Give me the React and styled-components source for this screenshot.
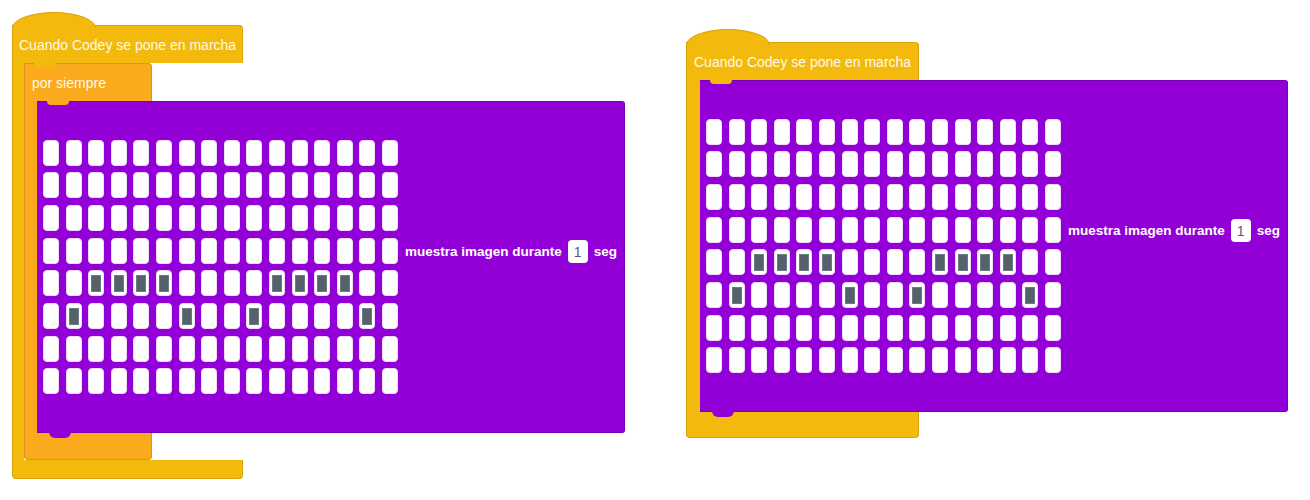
import React from "react";
import styled, { createGlobalStyle } from "styled-components";

const GlobalStyle = createGlobalStyle`
  body {
    margin: 0;
    background: #ffffff;
    font-family: "Liberation Sans", Arial, sans-serif;
  }
`;

const HAT = "#f4b90d";
const HAT_EDGE = "#d9a30b";
const LOOP = "#fcaa1d";
const LOOP_EDGE = "#e0921a";
const PURPLE = "#9300d7";
const PURPLE_EDGE = "#7a00b4";

const Page = styled.div`
  display: flex;
  align-items: flex-start;
  gap: 61px;
  padding: 25px 0 0 12px;
`;

const Script = styled.div`
  display: flex;
  flex-direction: column;
  align-items: flex-start;
  margin-top: ${props => props.$offset || 0}px;
`;

const Cap = styled.div`
  position: relative;
  box-sizing: border-box;
  width: ${props => props.$width}px;
  height: ${props => props.$height}px;
  background: ${props => props.$color};
  border: 1px solid ${props => props.$edge};
  border-bottom: none;
  border-radius: 0 4px 0 0;
  display: flex;
  align-items: center;
  padding-left: ${props => props.$pad}px;
  color: #fff9e6;
  font-size: 14px;

  ${props =>
    props.$hat &&
    `
    &::before {
      content: "";
      position: absolute;
      left: -1px;
      top: -14px;
      width: 82px;
      height: 15px;
      background: ${props.$color};
      border: 1px solid ${props.$edge};
      border-bottom: none;
      border-radius: 50% 50% 0 0 / 100% 100% 0 0;
    }
  `}

  ${props =>
    props.$notch &&
    `
    &::after {
      content: "";
      position: absolute;
      left: 9px;
      top: -1px;
      width: 22px;
      height: 4px;
      background: ${props.$notch};
      border-radius: 0 0 8px 8px;
    }
  `}
`;

const Body = styled.div`
  display: flex;
  align-items: stretch;
`;

const Arm = styled.div`
  width: ${props => props.$width}px;
  background: ${props => props.$color};
  border-left: 1px solid ${props => props.$edge};
  box-sizing: border-box;
`;

const Foot = styled.div`
  box-sizing: border-box;
  width: ${props => props.$width}px;
  height: ${props => props.$height}px;
  background: ${props => props.$color};
  border: 1px solid ${props => props.$edge};
  border-top: none;
  border-radius: 0 0 4px 4px;
`;

const DisplayBlock = styled.div`
  position: relative;
  box-sizing: border-box;
  width: 588px;
  height: 332px;
  background: ${PURPLE};
  border: 1px solid ${PURPLE_EDGE};
  border-left: none;
  border-radius: 0 3px 3px 0;
  display: flex;
  align-items: center;
  padding: 0 0 0 6px;

  &::before {
    content: "";
    position: absolute;
    left: 10px;
    top: -1px;
    width: 22px;
    height: 4px;
    background: ${props => props.$parent};
    border-radius: 0 0 8px 8px;
  }

  &::after {
    content: "";
    position: absolute;
    left: 12px;
    bottom: -6px;
    width: 22px;
    height: 6px;
    background: ${PURPLE};
    border-radius: 0 0 9px 9px;
  }
`;

const Matrix = styled.div`
  display: grid;
  grid-template-columns: repeat(16, 16px);
  grid-auto-rows: 26px;
  column-gap: 6.6px;
  row-gap: 6.7px;
`;

const Led = styled.div`
  box-sizing: border-box;
  background: #ffffff;
  border: 1px solid #ecdff3;
  border-radius: 4px;
  display: flex;
  align-items: center;
  justify-content: center;

  &::after {
    content: "";
    display: ${props => (props.$on ? "block" : "none")};
    width: 10px;
    height: 17px;
    background: #55616b;
    border: 1px solid #6e7a84;
    box-sizing: border-box;
  }
`;

const Label = styled.div`
  display: flex;
  align-items: center;
  gap: 6px;
  margin: 0 0 31px 7px;
  color: #ffffff;
  font-size: 13.5px;
  font-weight: 700;
`;

const NumberBox = styled.span`
  display: inline-flex;
  align-items: center;
  justify-content: center;
  width: 20px;
  height: 23px;
  background: #ffffff;
  border-radius: 4px;
  color: #575e75;
  font-weight: 400;
  font-size: 14px;
`;

const LIT = {
  4: [2, 3, 4, 5, 10, 11, 12, 13],
  5: [1, 6, 9, 14]
};

const ShowImage = ({ parent }) => (
  <DisplayBlock $parent={parent}>
    <Matrix>
      {Array.from({ length: 8 * 16 }, (_, i) => {
        const row = Math.floor(i / 16);
        const col = i % 16;
        const on = (LIT[row] || []).includes(col);
        return <Led key={i} $on={on} />;
      })}
    </Matrix>
    <Label>
      muestra imagen durante <NumberBox>1</NumberBox> seg
    </Label>
  </DisplayBlock>
);

const App = () => (
  <React.Fragment>
    <GlobalStyle />
    <Page>
      <Script>
        <Cap $hat $width={231} $height={38} $pad={6} $color={HAT} $edge={HAT_EDGE}>
          Cuando Codey se pone en marcha
        </Cap>
        <Body>
          <Arm $width={12} $color={HAT} $edge={HAT_EDGE} />
          <Script>
            <Cap
              $width={128}
              $height={38}
              $pad={7}
              $color={LOOP}
              $edge={LOOP_EDGE}
              $notch={HAT}
            >
              por siempre
            </Cap>
            <Body>
              <Arm $width={13} $color={LOOP} $edge={LOOP_EDGE} />
              <ShowImage parent={LOOP} />
            </Body>
            <Foot $width={128} $height={27} $color={LOOP} $edge={LOOP_EDGE} />
          </Script>
        </Body>
        <Foot $width={231} $height={19} $color={HAT} $edge={HAT_EDGE} />
      </Script>

      <Script $offset={17}>
        <Cap $hat $width={233} $height={38} $pad={7} $color={HAT} $edge={HAT_EDGE}>
          Cuando Codey se pone en marcha
        </Cap>
        <Body>
          <Arm $width={14} $color={HAT} $edge={HAT_EDGE} />
          <ShowImage parent={HAT} />
        </Body>
        <Foot $width={233} $height={26} $color={HAT} $edge={HAT_EDGE} />
      </Script>
    </Page>
  </React.Fragment>
);

export default App;
